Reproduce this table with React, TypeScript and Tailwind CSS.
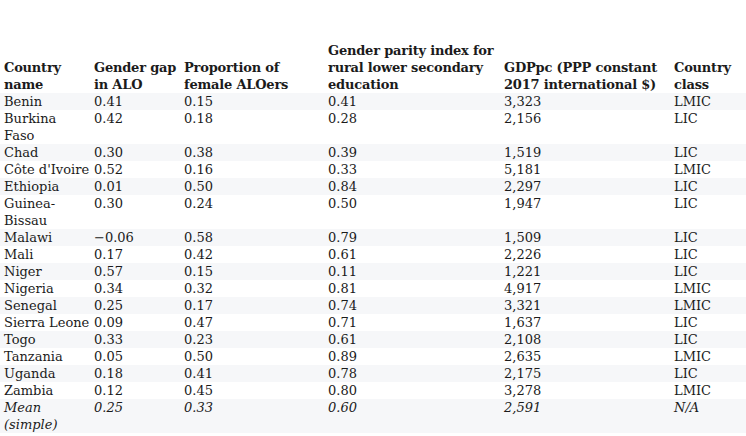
const cols = 'grid grid-cols-[90px_90px_144px_176px_170px_76px]'

type Row = [string, string, string, string, string, string]

const rows: Row[] = [
  ['Benin', '0.41', '0.15', '0.41', '3,323', 'LMIC'],
  ['Burkina Faso', '0.42', '0.18', '0.28', '2,156', 'LIC'],
  ['Chad', '0.30', '0.38', '0.39', '1,519', 'LIC'],
  ['Côte d\'Ivoire', '0.52', '0.16', '0.33', '5,181', 'LMIC'],
  ['Ethiopia', '0.01', '0.50', '0.84', '2,297', 'LIC'],
  ['Guinea-Bissau', '0.30', '0.24', '0.50', '1,947', 'LIC'],
  ['Malawi', '\u22120.06', '0.58', '0.79', '1,509', 'LIC'],
  ['Mali', '0.17', '0.42', '0.61', '2,226', 'LIC'],
  ['Niger', '0.57', '0.15', '0.11', '1,221', 'LIC'],
  ['Nigeria', '0.34', '0.32', '0.81', '4,917', 'LMIC'],
  ['Senegal', '0.25', '0.17', '0.74', '3,321', 'LMIC'],
  ['Sierra Leone', '0.09', '0.47', '0.71', '1,637', 'LIC'],
  ['Togo', '0.33', '0.23', '0.61', '2,108', 'LIC'],
  ['Tanzania', '0.05', '0.50', '0.89', '2,635', 'LMIC'],
  ['Uganda', '0.18', '0.41', '0.78', '2,175', 'LIC'],
  ['Zambia', '0.12', '0.45', '0.80', '3,278', 'LMIC'],
]

// header lines broken the way the source table wraps them
const headers = [
  ['Country', 'name'],
  ['Gender gap', 'in ALO'],
  ['Proportion of', 'female ALOers'],
  ['Gender parity index for', 'rural lower secondary', 'education'],
  ['GDPpc (PPP constant', '2017 international $)'],
  ['Country', 'class'],
]

const App = () => {
  return (
    <div className="min-h-[436px] w-[746px] overflow-hidden bg-white pt-[42px] font-['DejaVu_Serif',serif] text-[13px] leading-[17px] text-[#1b1b1b]">
      {/* header */}
      <div className={cols}>
        {headers.map((h) => (
          <div key={h[0] + h[1]} className="flex flex-col justify-end whitespace-nowrap pl-[4px] font-bold tracking-[-0.2px]">
            {h.map((line) => (
              <span key={line}>{line}</span>
            ))}
          </div>
        ))}
      </div>
      {/* body */}
      {rows.map((r, i) => (
        <div key={r[0]} className={`${cols} ${i % 2 === 0 ? 'bg-[#f6f7f9]' : 'bg-white'}`}>
          {r.map((c, j) => (
            <div key={j} className="pl-[4px]">
              {c}
            </div>
          ))}
        </div>
      ))}
      <div className={`${cols} bg-[#f6f7f9] italic`}>
        <div className="pl-[4px]">Mean (simple)</div>
        <div className="pl-[4px]">0.25</div>
        <div className="pl-[4px]">0.33</div>
        <div className="pl-[4px]">0.60</div>
        <div className="pl-[4px]">2,591</div>
        <div className="pl-[4px]">N/A</div>
      </div>
    </div>
  )
}

export default App
